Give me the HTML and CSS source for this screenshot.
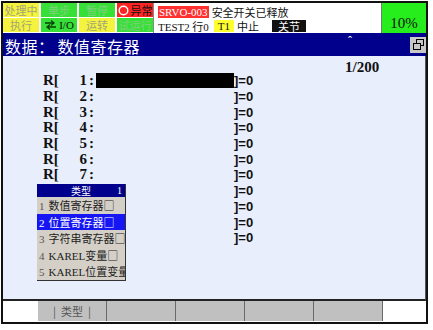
FILE: index.html
```html
<html>
  <head>
    <title>数据 - 数值寄存器</title>
    <link rel="stylesheet" href="styles.css">
    <meta name="viewport" content="width=device-width, initial-scale=1.0">
  </head>

  <body>
    <div class="frame">
      <div class="status">
        <div class="lamps">
          <div class="lamp yellow">处理中</div>
          <div class="lamp green">单步</div>
          <div class="lamp green">暂停</div>
          <div class="lamp red on">
            <svg width="11" height="11" viewBox="0 0 11 11"><circle cx="5.5" cy="5.5" r="4.3" fill="none" stroke="#fff" stroke-width="1.4"/></svg>
            异常
          </div>
          <div class="lamp yellow">执行</div>
          <div class="lamp green on">
            <svg width="13" height="10" viewBox="0 0 13 10">
              <path d="M1 3h9M7 0.5l3 2.5-3 2.5M12 7H3M6 4.5L3 7l3 2.5" fill="none" stroke="#064006" stroke-width="1.3"/>
            </svg>
            <span class="mono">I/O</span>
          </div>
          <div class="lamp yellow">运转</div>
          <div class="lamp green">试运行</div>
        </div>

        <div class="msg">
          <div class="msg-line"><span class="alarm">SRVO-003</span><span>安全开关已释放</span></div>
          <div class="msg-line">
            <span><span class="mono">TEST2</span> 行<span class="mono">0</span></span>
            <span class="tag-t1 mono">T1</span>
            <span>中止</span>
            <span class="tag-joint">关节</span>
          </div>
        </div>

        <div class="override">10%</div>
      </div>

      <div class="title">
        <div class="title-text">数据：<span class="title-sub">数值寄存器</span></div>
        <div class="caret">ˆ</div>
        <div class="win-btn">
          <svg width="13" height="12" viewBox="0 0 13 12">
            <rect x="4.5" y="0.5" width="7" height="6" fill="none" stroke="#000"/>
            <rect x="1.5" y="4.5" width="7" height="6" fill="#c8c8c8" stroke="#000"/>
          </svg>
        </div>
      </div>

      <div class="content">
        <div class="count">1/200</div>
        <div class="rows" id="rows"></div>

        <div class="menu">
          <div class="menu-head"><span>类型</span><span class="menu-page">1</span></div>
          <div class="menu-item"><span class="mi-num">1</span>数值寄存器□</div>
          <div class="menu-item sel"><span class="mi-num">2</span>位置寄存器□</div>
          <div class="menu-item"><span class="mi-num">3</span>字符串寄存器□</div>
          <div class="menu-item"><span class="mi-num">4</span><span class="mono">KAREL</span>变量□</div>
          <div class="menu-item"><span class="mi-num">5</span><span class="mono">KAREL</span>位置变量□</div>
        </div>
      </div>

      <div class="fkeys">
        <div class="fkey">|&nbsp; 类型 &nbsp;|</div>
        <div class="fkey"></div>
        <div class="fkey"></div>
        <div class="fkey"></div>
        <div class="fkey"></div>
      </div>
    </div>

    <script>
      const rows = document.getElementById("rows");

      // 11 register lines, the first one has the cursor
      // rows 8-11 sit under the type popup, so their left part is hidden
      for (let i = 1; i <= 11; i++) {
        const row = document.createElement("div");
        row.className = "reg" + (i >= 8 ? " covered" : "");
        row.innerHTML =
          '<span class="reg-label">R[</span>' +
          '<span class="reg-num">' + i + '</span>' +
          '<span class="reg-colon">:</span>' +
          '<span class="reg-cmt' + (i == 1 ? ' cursor' : '') + '"></span>' +
          '<span class="reg-end">]=0</span>';
        rows.appendChild(row);
      }
    </script>
  </body>
</html>
```

FILE: styles.css
```css
body,
html {
  margin: 0;
  padding: 0;
  background-color: white;
  font-family: "Noto Sans CJK SC", sans-serif;
}

.frame {
  margin: 1px 0 0 1px;
  width: 423px;
  height: 319px;
  border: 2px solid #111;
  display: flex;
  flex-direction: column;
  background-color: white;
}

.mono {
  font-family: "Liberation Serif", serif;
}

/* status bar */

.status {
  height: 30px;
  display: flex;
}

.lamps {
  width: 150px;
  display: grid;
  grid-template-columns: repeat(4, 36px);
  grid-template-rows: 14px 14px;
  column-gap: 2px;
  row-gap: 1px;
  padding-bottom: 1px;
}

.lamp {
  font-size: 11px;
  line-height: 14px;
  text-align: center;
  display: flex;
  align-items: center;
  justify-content: center;
  gap: 2px;
}

.yellow {
  background-color: #f4f43e;
  color: #a4a478;
}

.green {
  background-color: #36e036;
  color: #80cf80;
}

.red {
  background-color: #ff2424;
}

.lamp.on {
  color: #111;
}

.msg {
  flex: 1;
  border-left: 1px solid #888;
  padding: 3px 0 0 4px;
  font-size: 11px;
  color: #111;
}

.msg-line {
  height: 12px;
  line-height: 12px;
  white-space: nowrap;
  display: flex;
  align-items: center;
  gap: 3px;
}

.msg-line + .msg-line {
  margin-top: 2px;
}

.alarm {
  background-color: #ff3030;
  color: white;
  font-family: "Liberation Serif", serif;
  padding: 0 1px;
}

.tag-t1 {
  background-color: #ffff30;
  padding: 0 4px;
  margin-left: 2px;
}

.tag-joint {
  background-color: #111;
  color: white;
  padding: 0 6px;
  margin-left: 10px;
}

.override {
  width: 45px;
  border-left: 1px solid #777;
  background-color: #26ee1c;
  font-family: "Liberation Serif", serif;
  font-size: 15px;
  text-align: center;
  padding-top: 12px;
  box-sizing: border-box;
  color: #111;
}

/* title */

.title {
  height: 23px;
  background-color: #00008c;
  color: white;
  display: flex;
  align-items: flex-end;
  position: relative;
}

.title-text {
  font-size: 16px;
  line-height: 20px;
  padding-left: 2px;
  letter-spacing: 0.5px;
}

.title-sub {
  margin-left: 3px;
}

.caret {
  position: absolute;
  left: 345px;
  top: 1px;
  font-size: 12px;
  font-family: "Liberation Serif", serif;
}

.win-btn {
  margin-left: auto;
  margin-right: 0;
  margin-bottom: 3px;
  width: 16px;
  height: 16px;
  background-color: #c8c8c8;
  display: flex;
  align-items: center;
  justify-content: center;
}

/* register list */

.content {
  height: 243px;
  background-color: #e8eefb;
  border-bottom: 2px solid #222;
  border-right: 1px solid #555;
  position: relative;
  font-family: "Liberation Serif", serif;
  font-weight: bold;
  color: #111;
}

.count {
  font-size: 15px;
  line-height: 14px;
  padding: 4px 0 0 342px;
  height: 13px;
}

.reg {
  display: flex;
  align-items: center;
  height: 15.7px;
  padding-left: 40px;
  font-size: 15px;
}

.reg-label {
  width: 20px;
}

.reg-num {
  width: 24px;
  text-align: right;
}

.reg-colon {
  width: 9px;
  padding-left: 2px;
  box-sizing: border-box;
}

.covered .reg-label,
.covered .reg-num,
.covered .reg-colon {
  visibility: hidden;
}

.reg-cmt {
  width: 138px;
  height: 15px;
}

.reg-cmt.cursor {
  background-color: #000;
}

.reg-end {
  font-family: "Liberation Sans", sans-serif;
  font-size: 13px;
}

/* type popup */

.menu {
  position: absolute;
  left: 34px;
  top: 128px;
  width: 88px;
  background-color: #d4d0c8;
  border-right: 1px solid #333;
  border-bottom: 1px solid #333;
  font-family: "Noto Sans CJK SC", sans-serif;
  font-weight: normal;
  overflow: hidden;
}

.menu-head {
  height: 13px;
  background-color: #00008c;
  color: white;
  font-size: 10px;
  line-height: 13px;
  display: flex;
  justify-content: center;
  position: relative;
}

.menu-page {
  position: absolute;
  right: 3px;
  top: 0;
  font-family: "Liberation Serif", serif;
}

.menu-item {
  height: 16.5px;
  line-height: 16.5px;
  font-size: 11px;
  white-space: nowrap;
  color: #222;
  padding-left: 2px;
}

.menu-item.sel {
  background-color: #1616f4;
  color: white;
}

.mi-num {
  font-family: "Liberation Serif", serif;
  margin-right: 4px;
  color: #555;
}

.menu-item.sel .mi-num {
  color: white;
}

/* function keys */

.fkeys {
  height: 21px;
  display: flex;
  padding-left: 35px;
}

.fkey {
  width: 68px;
  height: 20px;
  background-color: #c0c0c0;
  border-right: 1px solid #6a6a6a;
  font-size: 11px;
  line-height: 20px;
  text-align: center;
  color: #555;
}
```
